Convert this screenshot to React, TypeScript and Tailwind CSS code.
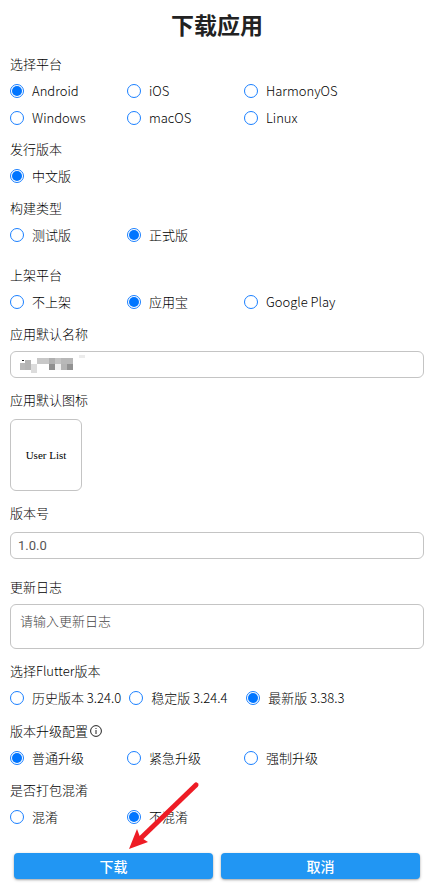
import { useState } from 'react';
import type { ReactNode } from 'react';

function Section({ title, extra, children, className = 'mb-[5px]' }: { title: string, extra?: ReactNode, children: ReactNode, className?: string }) {
  return (
    <fieldset className={className}>
      <legend className="flex h-[27px] w-full items-center gap-0.5 text-black">
        {title}
        {extra}
      </legend>
      {children}
    </fieldset>
  );
}

function RadioGroup({ name, options, initial }: { name: string, options: string[], initial: string }) {
  const [value, setValue] = useState(initial);

  return (
    <div className="flex flex-wrap">
      {options.map((option) => (
        <label key={option} className="flex h-[27px] min-w-[117px] items-center gap-2 pr-2 text-black">
          <input
            type="radio"
            name={name}
            checked={value === option}
            onChange={() => setValue(option)}
            className="grid size-3.5 shrink-0 appearance-none place-items-center rounded-full border border-[#1a80ff] before:size-2.5 before:rounded-full checked:before:bg-[#0075ff]"
          />
          {option}
        </label>
      ))}
    </div>
  );
}

// masked app name
const mosaic = [
  [20, 363, 5, 7, '#b9b9b9'], [25, 360, 6, 10, '#b4b4b4'], [31, 364, 6, 9, '#dcdcdc'],
  [37, 358, 12, 6, '#c8c8c8'], [49, 358, 6, 6, '#b0b0b0'], [55, 358, 6, 6, '#c4c4c4'], [61, 358, 12, 6, '#b8b8b8'],
  [49, 364, 6, 6, '#8f8f8f'], [55, 364, 6, 6, '#f0f0f0'], [61, 364, 6, 6, '#b4b4b4'], [67, 364, 6, 6, '#929292'],
  [79, 355, 6, 3, '#ececec'], [22, 360, 2, 1, '#222222'],
] as const;

export default function App() {
  const [appName, setAppName] = useState('');
  const [version, setVersion] = useState('1.0.0');
  const [log, setLog] = useState('');

  return (
    <form
      onSubmit={(e) => e.preventDefault()}
      className="bg-white pr-px pb-2 pl-2.5 font-['Noto_Sans_CJK_SC',sans-serif] text-[13px] font-light"
    >
      <h1 className="h-[50px] text-center text-[23px] leading-[48px] font-bold text-[#222]">下载应用</h1>

      <Section title="选择平台" className="mb-1">
        <RadioGroup name="platform" options={['Android', 'iOS', 'HarmonyOS', 'Windows', 'macOS', 'Linux']} initial="Android" />
      </Section>
      <Section title="发行版本">
        <RadioGroup name="locale" options={['中文版']} initial="中文版" />
      </Section>
      <Section title="构建类型" className="mb-[13px]">
        <RadioGroup name="build" options={['测试版', '正式版']} initial="正式版" />
      </Section>
      <Section title="上架平台">
        <RadioGroup name="store" options={['不上架', '应用宝', 'Google Play']} initial="应用宝" />
      </Section>

      <div className="mb-2">
        <label htmlFor="app-name" className="mb-1 flex h-[27px] items-center text-black">应用默认名称</label>
        <div className="relative">
          <input
            id="app-name"
            value={appName}
            onChange={(e) => setAppName(e.target.value)}
            className="block h-[27px] w-full rounded-md border border-[#c4c4c4] px-2"
          />
          {appName === '' && (
            <svg className="pointer-events-none absolute top-0 left-0 h-[27px] w-20" viewBox="10 351 80 27" shapeRendering="crispEdges" aria-hidden="true">
              {mosaic.map(([x, y, w, h, fill]) => (
                <rect key={`${x}-${y}`} x={x} y={y} width={w} height={h} fill={fill} />
              ))}
            </svg>
          )}
        </div>
      </div>

      <div className="mb-2">
        <div className="mb-1.5 flex h-[27px] items-center text-black">应用默认图标</div>
        <button type="button" className="flex size-[72px] items-center justify-center rounded-md border border-[#c4c4c4] font-['Liberation_Serif',serif] text-[11px] font-normal text-black">
          User List
        </button>
      </div>

      <div className="mb-3.5">
        <label htmlFor="version" className="mb-1.5 flex h-[27px] items-center text-black">版本号</label>
        <input
          id="version"
          value={version}
          onChange={(e) => setVersion(e.target.value)}
          className="block h-[27px] w-full rounded-md border border-[#c4c4c4] px-[7px] font-[Roboto,sans-serif] font-normal text-[#555]"
        />
      </div>

      <div className="mb-2">
        <label htmlFor="log" className="mb-1 flex h-[27px] items-center text-black">更新日志</label>
        <textarea
          id="log"
          value={log}
          onChange={(e) => setLog(e.target.value)}
          placeholder="请输入更新日志"
          className="block h-[45px] w-full resize-none rounded-md border border-[#c4c4c4] px-[9px] py-1.5 leading-5 placeholder:text-[#444]"
        />
      </div>

      <Section title="选择Flutter版本" className="mb-1.5">
        <RadioGroup name="flutter" options={['历史版本 3.24.0', '稳定版 3.24.4', '最新版 3.38.3']} initial="最新版 3.38.3" />
      </Section>
      <Section
        title="版本升级配置"
        extra={
          <svg className="size-3" viewBox="0 0 12 12" fill="none" stroke="#222" aria-hidden="true">
            <circle cx="6" cy="6" r="5.4" />
            <path d="M6 5v4M6 3v1" />
          </svg>
        }
      >
        <RadioGroup name="upgrade" options={['普通升级', '紧急升级', '强制升级']} initial="普通升级" />
      </Section>
      <Section title="是否打包混淆" className="mb-[23px]">
        <RadioGroup name="obfuscate" options={['混淆', '不混淆']} initial="不混淆" />
      </Section>

      <div className="relative grid grid-cols-2 gap-2 px-1">
        <button type="submit" className="h-[26px] rounded-sm bg-[#2196f3] text-sm leading-6 font-medium text-white shadow-sm shadow-black/30">下载</button>
        <button type="button" className="h-[26px] rounded-sm bg-[#2196f3] text-sm leading-6 font-medium text-white shadow-sm shadow-black/30">取消</button>
        <svg className="pointer-events-none absolute bottom-7 left-[118px] h-[70px] w-[72px]" viewBox="0 0 72 70" aria-hidden="true">
          <path d="M68 4 13 57" stroke="#ee1c25" strokeWidth="5" strokeLinecap="round" />
          <path d="M1 68 9 48l3 8 8 5Z" fill="#ee1c25" />
        </svg>
      </div>
    </form>
  );
}
